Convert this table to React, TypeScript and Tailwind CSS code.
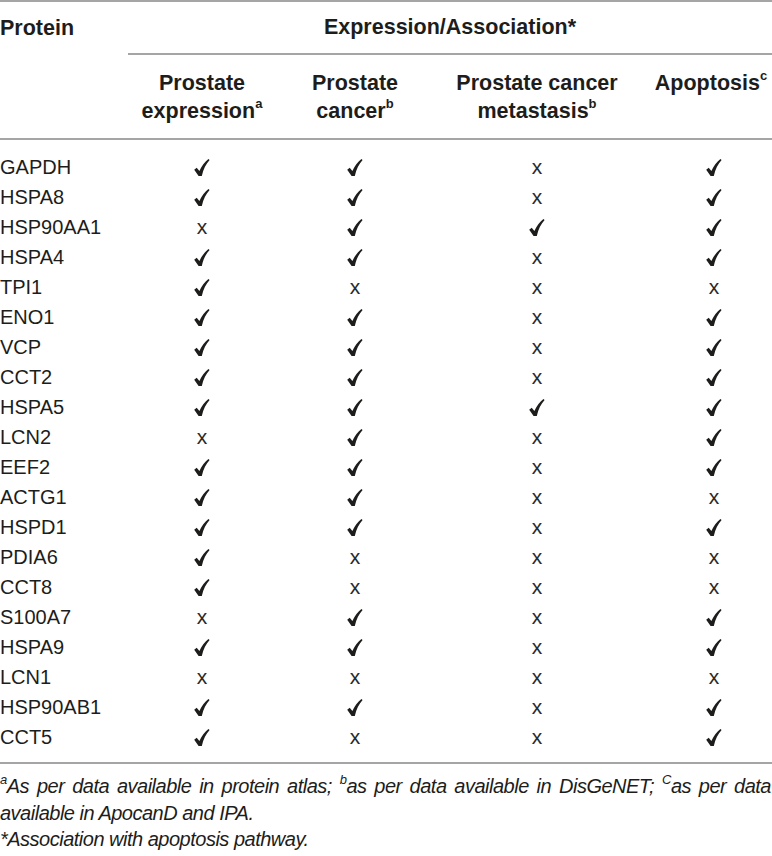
import React from "react";

type Mark = 1 | 0;

const rows: [string, Mark, Mark, Mark, Mark][] = [
  ["GAPDH", 1, 1, 0, 1],
  ["HSPA8", 1, 1, 0, 1],
  ["HSP90AA1", 0, 1, 1, 1],
  ["HSPA4", 1, 1, 0, 1],
  ["TPI1", 1, 0, 0, 0],
  ["ENO1", 1, 1, 0, 1],
  ["VCP", 1, 1, 0, 1],
  ["CCT2", 1, 1, 0, 1],
  ["HSPA5", 1, 1, 1, 1],
  ["LCN2", 0, 1, 0, 1],
  ["EEF2", 1, 1, 0, 1],
  ["ACTG1", 1, 1, 0, 0],
  ["HSPD1", 1, 1, 0, 1],
  ["PDIA6", 1, 0, 0, 0],
  ["CCT8", 1, 0, 0, 0],
  ["S100A7", 0, 1, 0, 1],
  ["HSPA9", 1, 1, 0, 1],
  ["LCN1", 0, 0, 0, 0],
  ["HSP90AB1", 1, 1, 0, 1],
  ["CCT5", 1, 0, 0, 1],
];

function Check() {
  return (
    <svg width="16" height="17" viewBox="0 0 16 17" aria-hidden="true">
      <path
        d="M0.2 10.7 L2.7 8.7 L5.4 11.9 C7.6 7.2 10.6 3.1 14.4 0 L15.6 0.9 C12 4.8 9.4 9.8 7.8 16.9 L4.6 16.9 Z"
        fill="#1d1d1b"
      />
    </svg>
  );
}

function Cell({ v, last }: { v: Mark; last?: boolean }) {
  return (
    <div className={`flex items-center justify-center h-[30px] ${last ? "pl-[16px]" : ""}`}>
      {v ? <Check /> : <span className="text-[21px] leading-[30px] text-[#2a2a2a]">x</span>}
    </div>
  );
}

export default function App() {
  return (
    <div className="w-[772px] h-[856px] bg-white text-[#1d1d1b] font-['Liberation_Sans',Arial,sans-serif] overflow-hidden">
      {/* Header */}
      <div className="flex border-t-2 border-b-2 border-[#a5a5a5]">
        <div className="w-[128px] h-[53px] flex items-center text-[21.5px] font-bold">Protein</div>
        <div className="flex-1">
          <div className="h-[53px] flex items-center justify-center border-b-2 border-[#a5a5a5] text-[21.5px] font-bold">
            Expression/Association*
          </div>
          <div className="grid grid-cols-[148px_158px_206px_132px] h-[83px] pt-[13.5px] text-[21.5px] font-bold leading-[28px] text-center">
            <div>
              Prostate
              <br />
              expression<sup className="text-[13px] top-[-0.75em]">a</sup>
            </div>
            <div>
              Prostate
              <br />
              cancer<sup className="text-[13px] top-[-0.75em]">b</sup>
            </div>
            <div>
              Prostate cancer
              <br />
              metastasis<sup className="text-[13px] top-[-0.75em]">b</sup>
            </div>
            <div className="pl-[10px]">
              Apoptosis<sup className="text-[13px] top-[-0.75em]">c</sup>
            </div>
          </div>
        </div>
      </div>

      {/* Body */}
      <div className="pt-[12px] pb-[10px] border-b-2 border-[#a5a5a5]">
        {rows.map(([name, a, b, c, d]) => (
          <div key={name} className="grid grid-cols-[128px_148px_158px_206px_132px] h-[30px]">
            <div className="text-[20px] leading-[30px]">{name}</div>
            <Cell v={a} />
            <Cell v={b} />
            <Cell v={c} />
            <Cell v={d} last />
          </div>
        ))}
      </div>

      {/* Footnotes */}
      <div className="pt-[9px] pr-[1px] italic text-[20px] leading-[26.5px] tracking-[-0.5px]">
        <div className="text-justify [text-align-last:justify]">
          <sup className="text-[13px] top-[-0.7em]">a</sup>As per data available in protein atlas;{" "}
          <sup className="text-[13px] top-[-0.7em]">b</sup>as per data available in DisGeNET;{" "}
          <sup className="text-[13px] top-[-0.7em]">C</sup>as per data
        </div>
        <div className="whitespace-nowrap">available in ApocanD and IPA.</div>
        <div className="whitespace-nowrap">*Association with apoptosis pathway.</div>
      </div>
    </div>
  );
}
